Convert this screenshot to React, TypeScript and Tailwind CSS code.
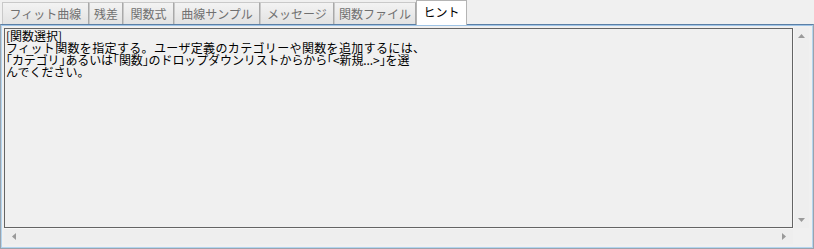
import React from 'react';

const tabs = [
  { label: 'フィット曲線', w: 'w-[87px]' },
  { label: '残差', w: 'w-[34px]' },
  { label: '関数式', w: 'w-[51px]' },
  { label: '曲線サンプル', w: 'w-[86px]' },
  { label: 'メッセージ', w: 'w-[74px]' },
  { label: '関数ファイル', w: 'w-[82px]' },
];

const font = "font-['Noto_Sans_CJK_JP','Noto_Sans',sans-serif]";

function Arrow({ dir }: { dir: 'up' | 'down' | 'left' | 'right' }) {
  const pts = {
    up: '3.5,0 7,4 0,4',
    down: '0,0 7,0 3.5,4',
    left: '4,0 4,7 0,3.5',
    right: '0,0 4,3.5 0,7',
  }[dir];
  const vertical = dir === 'up' || dir === 'down';
  return (
    <svg width={vertical ? 7 : 4} height={vertical ? 4 : 7} viewBox={vertical ? '0 0 7 4' : '0 0 4 7'}>
      <polygon points={pts} fill="#9a9a9a" />
    </svg>
  );
}

export default function App() {
  return (
    <div className={`w-[814px] h-[249px] bg-[#f0f0f0] flex flex-col overflow-hidden ${font}`}>
      {/* tab strip */}
      <div className="flex items-end pl-[2px] h-[24px] relative z-10">
        {tabs.map((t) => (
          <div
            key={t.label}
            className={`${t.w} h-[22px] flex items-center justify-center border border-[#c9c9c9] border-r-[#a9a9a9] border-b-0 bg-gradient-to-b from-[#f3f3f3] to-[#e2e2e2] text-[12px] leading-none text-[#707070]`}
          >
            {t.label}
          </div>
        ))}
        <div className="w-[51px] h-[25px] -mb-px flex items-center justify-center border border-[#b4b4b4] border-b-0 bg-white text-[12px] leading-none text-black pb-[2px]">
          ヒント
        </div>
      </div>

      {/* panel */}
      <div className="flex-1 border border-[#9aa3ad] border-t-[#5b7fa6]">
        <div className="h-full border border-[#b3d5ef] border-t-[#9fc4e6] pt-[2px] pl-[2px] pr-[2px] pb-[1px]">
          <div className="grid grid-cols-[789px_16px] grid-rows-[200px_16px]">
            <div className="border border-[#646464] bg-[#f0f0f0] pl-px pt-[1px] text-[12px] leading-[12px] text-black">
              <p className="[font-feature-settings:'halt']">[関数選択]</p>
              <p className="tracking-[0.35px]">フィット関数を指定する。ユーザ定義のカテゴリーや関数を追加するには、</p>
              <p className="[font-feature-settings:'halt'] tracking-[-0.1px]">
                「カテゴリ」あるいは「関数」のドロップダウンリストからから「&lt;新規...&gt;」を選
              </p>
              <p>んでください。</p>
            </div>
            <div className="bg-[#eeeeee] border-l border-[#f7f7f7] flex flex-col justify-between items-center py-[6px]">
              <Arrow dir="up" />
              <Arrow dir="down" />
            </div>
            <div className="bg-[#eeeeee] border-t border-[#f7f7f7] flex items-center justify-between pl-[8px] pr-[7px]">
              <Arrow dir="left" />
              <Arrow dir="right" />
            </div>
            <div className="bg-[#f0f0f0]" />
          </div>
        </div>
      </div>
    </div>
  );
}
